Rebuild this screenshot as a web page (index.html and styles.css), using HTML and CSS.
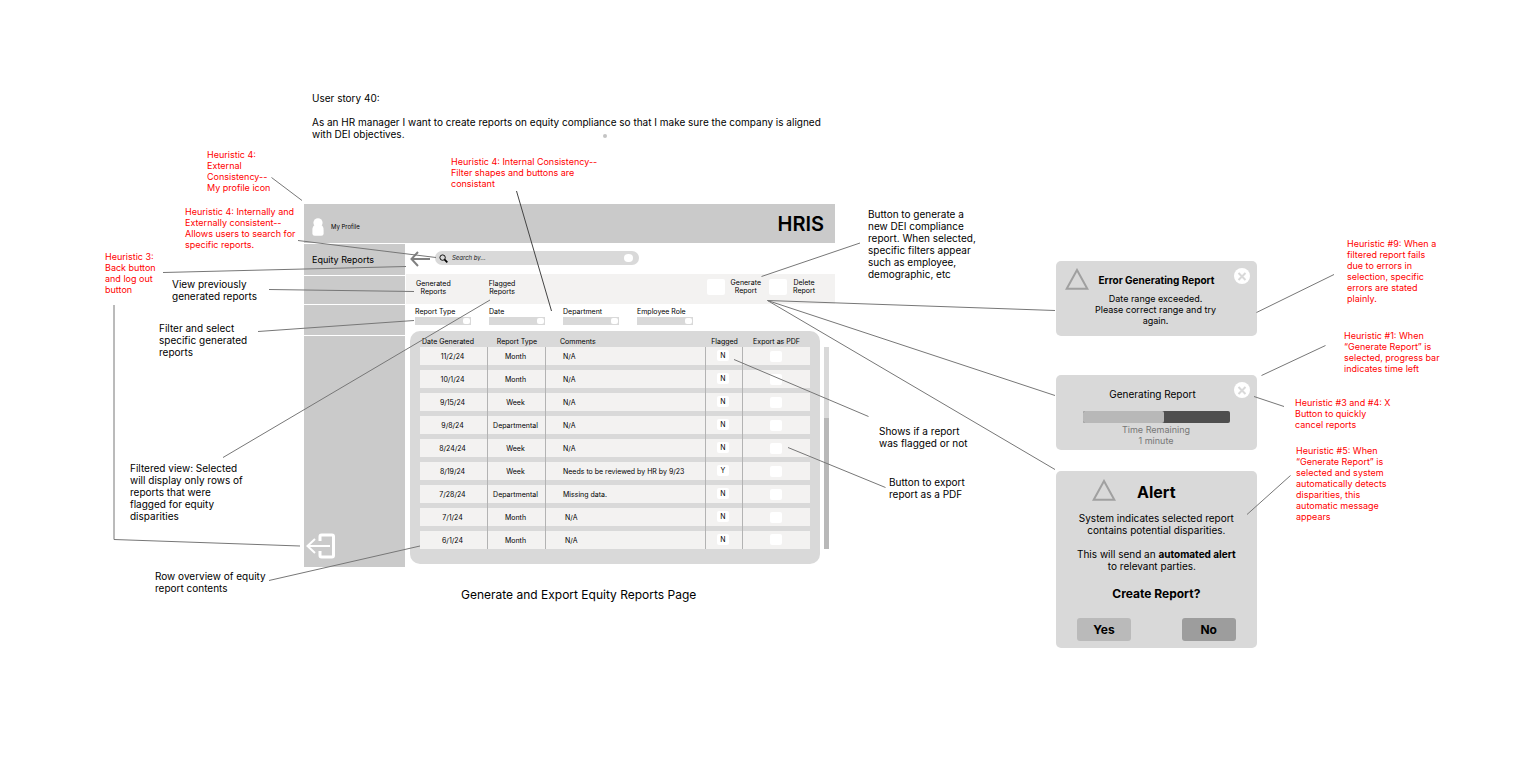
FILE: index.html
```html
<!DOCTYPE html>
<html lang="en">
<head>
<meta charset="utf-8">
<meta name="viewport" content="width=device-width, initial-scale=1">
<title>Generate and Export Equity Reports Page</title>
<link rel="stylesheet" href="styles.css">
</head>
<body>
<main class="board">

  <section class="note story">
    <p>User story 40:</p>
    <p>As an HR manager I want to create reports on equity compliance so that I make sure the company is aligned<br>with DEI objectives.</p>
  </section>

  <section class="app">
    <header class="app-header">
      <a class="profile" href="#profile">
        <svg class="person" viewBox="0 0 12 18" aria-hidden="true"><circle cx="6" cy="4.800" r="4.600"/><path d="M3 7h6c2 1 2.600 2.500 2.600 5v3.200q0 2.500-2.500 2.500H2.900q-2.500 0-2.500-2.500V12c0-2.500.6-4 2.600-5z"/></svg>
        <span>My Profile</span>
      </a>
      <strong class="brand">HRIS</strong>
    </header>

    <nav class="sidebar">
      <div class="side-title">Equity Reports</div>
      <div></div>
      <div></div>
      <div class="side-foot">
        <button class="plain" type="button" aria-label="Log out">
          <svg class="logout" viewBox="0 0 30 26" aria-hidden="true"><path d="M14 8V3.500Q14 2 15.500 2H26q1.500 0 1.500 1.500v19q0 1.500-1.500 1.500H15.500Q14 24 14 22.500V18" stroke-width="3"/><path d="M24 13H2M9 6l-7.500 7L9 20" stroke-width="2"/></svg>
        </button>
      </div>
    </nav>

    <div class="content">
      <div class="search-row">
        <button class="plain" type="button" aria-label="Back">
          <svg class="back" viewBox="0 0 20 16" aria-hidden="true"><path d="M20 8H1.500M8 1L1.500 8 8 15"/></svg>
        </button>
        <div class="search">
          <svg class="lens" viewBox="0 0 10 10" aria-hidden="true"><circle cx="4" cy="4" r="3"/><path d="M6 6l3.200 3.200" stroke-width="2"/></svg>
          <input type="search" aria-label="Search reports" placeholder="Search by...">
          <button class="search-go" type="button" aria-label="Search"></button>
        </div>
      </div>

      <div class="toolbar">
        <a class="tab" href="#generated">Generated<br>Reports</a>
        <a class="tab" href="#flagged">Flagged<br>Reports</a>
        <div class="actions">
          <button class="action" type="button"><i class="swatch"></i><span>Generate<br>Report</span></button>
          <button class="action" type="button"><i class="swatch"></i><span>Delete<br>Report</span></button>
        </div>
      </div>

      <div class="filters">
        <div class="filter"><label for="f-type">Report Type</label><div class="pick"><select id="f-type"><option></option></select></div></div>
        <div class="filter"><label for="f-date">Date</label><div class="pick"><select id="f-date"><option></option></select></div></div>
        <div class="filter"><label for="f-dept">Department</label><div class="pick"><select id="f-dept"><option></option></select></div></div>
        <div class="filter"><label for="f-role">Employee Role</label><div class="pick"><select id="f-role"><option></option></select></div></div>
      </div>

      <div class="results">
        <div class="panel">
          <table>
            <colgroup><col class="c-date"><col class="c-type"><col class="c-comments"><col class="c-flag"><col class="c-pdf"></colgroup>
            <thead>
              <tr><th class="start">Date Generated</th><th>Report Type</th><th class="comment">Comments</th><th>Flagged</th><th>Export as PDF</th></tr>
            </thead>
            <tbody>
              <tr><td>11/2/24</td><td>Month</td><td>N/A</td><td><span class="flag">N</span></td><td><button type="button" aria-label="Export 11/2/24"></button></td></tr>
              <tr><td>10/1/24</td><td>Month</td><td>N/A</td><td><span class="flag">N</span></td><td><button type="button" aria-label="Export 10/1/24"></button></td></tr>
              <tr><td>9/15/24</td><td>Week</td><td>N/A</td><td><span class="flag">N</span></td><td><button type="button" aria-label="Export 9/15/24"></button></td></tr>
              <tr><td>9/8/24</td><td>Departmental</td><td>N/A</td><td><span class="flag">N</span></td><td><button type="button" aria-label="Export 9/8/24"></button></td></tr>
              <tr><td>8/24/24</td><td>Week</td><td>N/A</td><td><span class="flag">N</span></td><td><button type="button" aria-label="Export 8/24/24"></button></td></tr>
              <tr><td>8/19/24</td><td>Week</td><td>Needs to be reviewed by HR by 9/23</td><td><span class="flag">Y</span></td><td><button type="button" aria-label="Export 8/19/24"></button></td></tr>
              <tr><td>7/28/24</td><td>Departmental</td><td>Missing data.</td><td><span class="flag">N</span></td><td><button type="button" aria-label="Export 7/28/24"></button></td></tr>
              <tr><td>7/1/24</td><td>Month</td><td class="inset">N/A</td><td><span class="flag">N</span></td><td><button type="button" aria-label="Export 7/1/24"></button></td></tr>
              <tr><td>6/1/24</td><td>Month</td><td class="inset">N/A</td><td><span class="flag">N</span></td><td><button type="button" aria-label="Export 6/1/24"></button></td></tr>
            </tbody>
          </table>
        </div>
        <div class="scrollbar"><div class="thumb"></div></div>
      </div>
    </div>
  </section>

  <h1 class="caption">Generate and Export Equity Reports Page</h1>

  <section class="card error-card">
    <svg class="warn" viewBox="0 0 24 22" aria-hidden="true"><path d="M12 2L22.300 20.800H1.700z"/></svg>
    <button class="close" type="button" aria-label="Close"><svg viewBox="0 0 16 16" aria-hidden="true"><path d="M4.500 5l7 7M11.500 5l-7 7"/></svg></button>
    <h2>Error Generating Report</h2>
    <p>Date range exceeded.<br>Please correct range and try<br>again.</p>
  </section>

  <section class="card progress-card">
    <button class="close" type="button" aria-label="Cancel"><svg viewBox="0 0 16 16" aria-hidden="true"><path d="M4.500 5l7 7M11.500 5l-7 7"/></svg></button>
    <label for="progress">Generating Report</label>
    <progress id="progress" max="100" value="55"></progress>
    <p>Time Remaining<br>1 minute</p>
  </section>

  <section class="card alert-card">
    <div class="alert-head">
      <svg class="warn" viewBox="0 0 24 22" aria-hidden="true"><path d="M12 2L22.300 20.800H1.700z"/></svg>
      <h2>Alert</h2>
    </div>
    <p>System indicates selected report<br>contains potential disparities.</p>
    <p>This will send an <b>automated alert</b><br><span class="tail">to relevant parties.</span></p>
    <h3>Create Report?</h3>
    <div class="choices">
      <button class="yes" type="button">Yes</button>
      <button class="no" type="button">No</button>
    </div>
  </section>

  <svg class="connectors" aria-hidden="true">
    <path d="M271.500 177.500L302 200.500M298 240.500L436 257.500M163 272.500L406 266.500M269 289.500L414 291.500M258 331.500L414 320.500M223 457.500L490 300M114 305V539.500L300 546M269 580.500L420 546"/>
    <path class="dark" d="M516.500 191L551.500 311"/>
    <path d="M761.500 276.500L860 243M1055 310.500L767.500 300.500L1055 395.500M767.500 300.500L1055 469.500M734 359.500L868.500 416.500M788 447.500L885.500 487.500"/>
    <path d="M1256.500 312.500L1334 274.500M1261.500 375.500L1325.500 345.500M1254 396.500L1284 406.500M1247 514.500L1290.500 475.500"/>
    <circle cx="605" cy="136" r="2"/>
  </svg>

  <p class="note n-view">View previously<br>generated reports</p>
  <p class="note n-filter">Filter and select<br>specific generated<br>reports</p>
  <p class="note n-filtered">Filtered view: Selected<br>will display only rows of<br>reports that were<br>flagged for equity<br>disparities</p>
  <p class="note n-row">Row overview of equity<br>report contents</p>
  <p class="note n-generate">Button to generate a<br>new DEI compliance<br>report. When selected,<br>specific filters appear<br>such as employee,<br>demographic, etc</p>
  <p class="note n-shows">Shows if a report<br>was flagged or not</p>
  <p class="note n-export">Button to export<br>report as a PDF</p>

  <p class="note red h-profile">Heuristic 4:<br>External<br>Consistency--<br>My profile icon</p>
  <p class="note red h-search">Heuristic 4: Internally and<br>Externally consistent--<br>Allows users to search for<br>specific reports.</p>
  <p class="note red h-back">Heuristic 3:<br>Back button<br>and log out<br>button</p>
  <p class="note red h-internal">Heuristic 4: Internal Consistency--<br>Filter shapes and buttons are<br>consistant</p>
  <p class="note red h-nine">Heuristic #9: When a<br>filtered report fails<br>due to errors in<br>selection, specific<br>errors are stated<br>plainly.</p>
  <p class="note red h-one">Heuristic #1: When<br>“Generate Report” is<br>selected, progress bar<br>indicates time left</p>
  <p class="note red h-three">Heuristic #3 and #4: X<br>Button to quickly<br>cancel reports</p>
  <p class="note red h-five">Heuristic #5: When<br>“Generate Report” is<br>selected and system<br>automatically detects<br>disparities, this<br>automatic message<br>appears</p>
</main>
</body>
</html>
```

FILE: styles.css
```css
* { box-sizing: border-box; }

body {
  margin: 0;
  background: #fff;
  color: #000;
  font-family: Inter, "Liberation Sans", sans-serif;
  font-size: 10px;
  line-height: 12px;
}

p, h1, h2, h3 { margin: 0; }
a { color: inherit; text-decoration: none; }
svg { display: block; fill: none; }
button, input, select { font: inherit; color: inherit; border: 0; padding: 0; margin: 0; }
.plain { background: none; }

/* Free canvas: windows, notes and connectors are pinned to it */
.board { position: relative; min-height: 100vh; overflow: hidden; }
.connectors { position: absolute; inset: 0; width: 100%; height: 100%; pointer-events: none; stroke: #777; }
.connectors .dark { stroke: #444; }
.connectors circle { fill: #c4c4c4; stroke: none; }

.note { position: absolute; white-space: nowrap; }
.red { color: #ff0000; font-size: 9px; line-height: 11px; }
.story { left: 312px; top: 92px; display: grid; gap: 12px; }
.n-view { left: 172px; top: 278px; }
.n-filter { left: 159px; top: 322px; }
.n-filtered { left: 130px; top: 462px; }
.n-row { left: 155px; top: 570px; }
.n-generate { left: 868px; top: 208px; }
.n-shows { left: 879px; top: 425px; }
.n-export { left: 889px; top: 476px; }
.h-profile { left: 207px; top: 149px; }
.h-search { left: 185px; top: 206px; }
.h-back { left: 105px; top: 251px; }
.h-internal { left: 451px; top: 156px; }
.h-nine { left: 1347px; top: 238px; }
.h-one { left: 1344px; top: 330px; }
.h-three { left: 1295px; top: 397px; }
.h-five { left: 1296px; top: 445px; }
.caption { position: absolute; left: 461px; top: 587px; font-size: 12px; line-height: 16px; font-weight: 400; white-space: nowrap; }

/* Application window */
.app {
  position: absolute;
  left: 304px;
  top: 204px;
  width: 531px;
  display: grid;
  grid-template-columns: 101px 1fr;
  row-gap: 1px;
  font-size: 7px;
  line-height: 8px;
}
.app-header {
  grid-column: 1 / -1;
  display: flex;
  justify-content: space-between;
  align-items: center;
  height: 39px;
  padding: 0 11px 0 8px;
  background: #cacaca;
}
.profile { display: flex; align-items: center; gap: 7px; padding-top: 6px; font-size: 6px; }
.person { width: 12px; height: 18px; fill: #fff; }
.brand { font-size: 20px; line-height: 24px; font-weight: 600; }

.sidebar { display: grid; grid-template-rows: 31px 28px 30px 1fr; row-gap: 1px; }
.sidebar > div { background: #cacaca; }
.sidebar .side-title { padding: 10px 8px; font-size: 9px; line-height: 12px; }
.side-foot { display: flex; align-items: flex-end; padding: 0 2px 8px; }
.logout { width: 30px; height: 26px; stroke: #fff; }

.search-row { display: flex; align-items: center; gap: 5px; height: 30px; padding: 0 5px; }
.back { width: 20px; height: 16px; stroke: #808080; stroke-width: 2; }
.search { display: flex; align-items: center; gap: 4px; width: 204px; height: 14px; margin-bottom: 2px; padding: 0 6px 0 4px; border-radius: 7px; background: #d9d9d9; }
.lens { width: 9px; height: 9px; stroke: #000; stroke-width: 1; }
.search input { flex: 1; min-width: 0; background: none; appearance: none; outline: 0; font-size: 6px; line-height: 8px; font-style: italic; }
.search input::placeholder { color: #222; }
.search-go { width: 9px; height: 8px; border-radius: 4px; background: #fff; }

.toolbar { display: flex; align-items: center; height: 30px; margin-left: 1px; padding: 0 20px 0 10px; background: #f3f2f1; text-align: center; }
.tab { margin-right: 38px; padding-bottom: 3px; }
.actions { display: flex; gap: 8px; margin-left: auto; padding-bottom: 4px; }
.action { display: flex; align-items: center; gap: 6px; background: none; text-align: center; }
.swatch { width: 18px; height: 16px; border-radius: 2px; background: #fff; }

.filters { display: flex; gap: 18px; padding: 3px 10px 6px; }
.filter { display: grid; gap: 1px; width: 56px; }
.filter label { line-height: 9px; white-space: nowrap; }
.pick { position: relative; height: 8px; }
.pick select { display: block; width: 100%; height: 8px; appearance: none; border-radius: 0; background: #d9d9d9; }
.pick::after { content: ""; position: absolute; right: 1px; top: 1px; width: 7px; height: 6px; border-radius: 2px; background: #fff; pointer-events: none; }

.results { display: flex; gap: 4px; padding: 0 6px 3px 5px; }
.panel { flex: 1; padding: 6px 10px 15px; border-radius: 10px; background: #d9d9d9; }
table { width: 100%; table-layout: fixed; border-spacing: 0; }
.c-date { width: 68px; }
.c-type { width: 58px; }
.c-comments { width: 160px; }
.c-flag { width: 37px; }
.c-pdf { width: 67px; }
th { height: 10px; padding: 0; font-weight: 400; white-space: nowrap; }
th.start { padding-left: 2px; text-align: left; }
th.comment { padding-left: 14px; text-align: left; }
td { height: 23px; padding: 1px 2px 4px 0; border-right: 1px solid #b3b3b3; background: linear-gradient(#f3f2f1 18px, #d9d9d9 18px); text-align: center; vertical-align: middle; white-space: nowrap; }
td:nth-child(3) { padding-left: 17px; text-align: left; }
td.inset:nth-child(3) { padding-left: 19px; }
td:last-child { border-right: 0; }
tr:last-child td { height: 18px; padding-top: 1px; padding-bottom: 0; }
.flag, td button { display: block; width: 12px; height: 11px; margin: 0 auto 2px; border-radius: 2px; background: #fff; line-height: 12px; }
.flag { margin-bottom: 3px; }
.scrollbar { display: flex; flex-direction: column; justify-content: flex-end; width: 5px; margin: 16px 0 15px; background: #d9d9d9; }
.thumb { height: 65%; background: #b8b8b8; }

/* Dialog cards */
.card { position: absolute; left: 1056px; width: 201px; border-radius: 5px; background: #d9d9d9; text-align: center; }
.card h2, .card h3 { font-weight: 700; }
.warn { width: 24px; height: 22px; stroke: #a0a0a0; stroke-width: 2; }
.close { position: absolute; right: 7px; top: 7px; width: 16px; height: 16px; border-radius: 50%; background: #fff; }
.close svg { width: 16px; height: 16px; stroke: #d9d9d9; stroke-width: 2; }

.error-card { top: 261px; padding: 13px 0 10px; }
.error-card .warn { position: absolute; left: 9px; top: 7px; }
.error-card h2 { margin-bottom: 7px; font-size: 10px; line-height: 12px; }
.error-card p { padding-right: 2px; font-size: 9px; line-height: 11px; }

.progress-card { top: 375px; padding: 13px 27px 4px; }
.progress-card label { display: block; margin-bottom: 11px; padding-right: 8px; font-size: 10px; line-height: 12px; }
.progress-card progress { display: block; width: 100%; height: 12px; appearance: none; border: 0; }
.progress-card progress::-webkit-progress-bar { border-radius: 2px; background: #4f4f4f; }
.progress-card progress::-webkit-progress-value { border-radius: 2px; background: #b8b8b8; }
.progress-card p { padding-top: 1px; padding-right: 1px; color: #777; font-size: 9px; line-height: 11px; }

.alert-card { top: 471px; display: grid; gap: 12px; padding: 8px 22px 7px 21px; white-space: nowrap; }
.alert-head { display: flex; align-items: flex-start; gap: 21px; height: 21px; padding-left: 15px; }
.alert-head h2 { padding-top: 3px; font-size: 16px; line-height: 20px; }
.alert-card p { justify-self: center; }
.alert-card .tail { padding-right: 9px; }
.alert-card h3 { font-size: 12px; line-height: 16px; padding-top: 2px; }
.choices { display: flex; justify-content: space-between; padding-top: 4px; }
.choices button { width: 54px; height: 23px; border-radius: 3px; font-size: 12px; font-weight: 700; }
.choices .yes { background: #bababa; }
.choices .no { background: #9d9d9d; }
```
